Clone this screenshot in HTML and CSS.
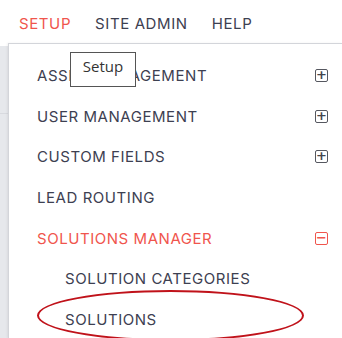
FILE: index.html
```html
<!DOCTYPE html>
<html lang="en">
<head>
  <meta charset="UTF-8">
  <title>Setup menu</title>
  <link rel="stylesheet" href="styles.css">
</head>
<body>
  <!-- top navigation -->
  <nav class="topnav">
    <a class="topnav-item active">SETUP</a>
    <a class="topnav-item">SITE ADMIN</a>
    <a class="topnav-item">HELP</a>
  </nav>

  <div class="main">
    <!-- page behind the dropdown -->
    <div class="page-edge">
      <div class="page-edge-top"></div>
    </div>

    <!-- setup dropdown -->
    <div class="dropdown">
      <div class="menu-row">
        <span>ASSET MANAGEMENT</span>
        <span class="toggle">+</span>
      </div>
      <div class="menu-row">
        <span>USER MANAGEMENT</span>
        <span class="toggle">+</span>
      </div>
      <div class="menu-row">
        <span>CUSTOM FIELDS</span>
        <span class="toggle">+</span>
      </div>
      <div class="menu-row">
        <span>LEAD ROUTING</span>
      </div>
      <div class="menu-row open">
        <span>SOLUTIONS MANAGER</span>
        <span class="toggle">&minus;</span>
      </div>
      <div class="menu-row sub">
        <span>SOLUTION CATEGORIES</span>
      </div>
      <div class="menu-row sub marked">
        <span>SOLUTIONS</span>
      </div>

      <!-- tooltip over the first row -->
      <div class="tooltip">Setup</div>
    </div>
  </div>
</body>
</html>
```

FILE: styles.css
```css
/* base */
body {
  margin: 0;
  background: #fff;
  font-family: Inter, "Noto Sans", sans-serif;
  color: #3d4051;
  height: 338px;
  overflow: hidden;
}

/* top navigation */
.topnav {
  display: flex;
  gap: 24px;
  height: 43px;
  padding-left: 19px;
  align-items: center;
  box-sizing: border-box;
  padding-top: 4px;
}
.topnav-item {
  font-size: 15px;
  letter-spacing: 0.6px;
}
.topnav-item.active {
  color: #f0554d;
}

/* content under the nav */
.main {
  display: flex;
  height: 295px;
}
.page-edge {
  width: 8px;
  margin-top: 3px;
  background: #e6e8ec;
}
.page-edge-top {
  height: 67px;
  border-bottom: 1px solid #d8dadf;
}

/* dropdown panel */
.dropdown {
  flex: 1;
  position: relative;
  border-left: 1px solid #d3d5da;
  border-top: 1px solid #d3d5da;
  box-shadow: -1px 0 2px rgba(0, 0, 0, 0.06);
  padding-top: 11px;
  background: #fff;
}
.menu-row {
  display: flex;
  justify-content: space-between;
  align-items: center;
  height: 40.7px;
  padding-left: 28px;
  padding-right: 14px;
  font-size: 15px;
  letter-spacing: 0.55px;
}
.menu-row.open {
  color: #f0554d;
}
.menu-row.sub {
  padding-left: 56px;
}

/* plus / minus boxes */
.toggle {
  width: 11px;
  height: 11px;
  border: 1.5px solid #55575f;
  border-radius: 2px;
  font-size: 13px;
  line-height: 10px;
  letter-spacing: 0;
  text-align: center;
  font-family: "DejaVu Sans", sans-serif;
  font-weight: bold;
  color: #44464e;
}
.menu-row.open .toggle {
  border-color: #f0554d;
  color: #f0554d;
}

/* red ring round SOLUTIONS */
.menu-row.marked {
  position: relative;
}
.menu-row.marked::before {
  content: "";
  position: absolute;
  left: 28px;
  top: -9px;
  width: 263px;
  height: 47px;
  border: 2px solid #c0121a;
  border-radius: 50%;
}

/* tooltip */
.tooltip {
  position: absolute;
  left: 61px;
  top: 8px;
  width: 66px;
  height: 35px;
  border: 1px solid #555;
  background: #fff;
  font-family: "Open Sans", "Noto Sans", sans-serif;
  font-size: 15px;
  color: #333;
  display: flex;
  align-items: center;
  justify-content: center;
  box-sizing: border-box;
  padding-bottom: 7px;
}
```
